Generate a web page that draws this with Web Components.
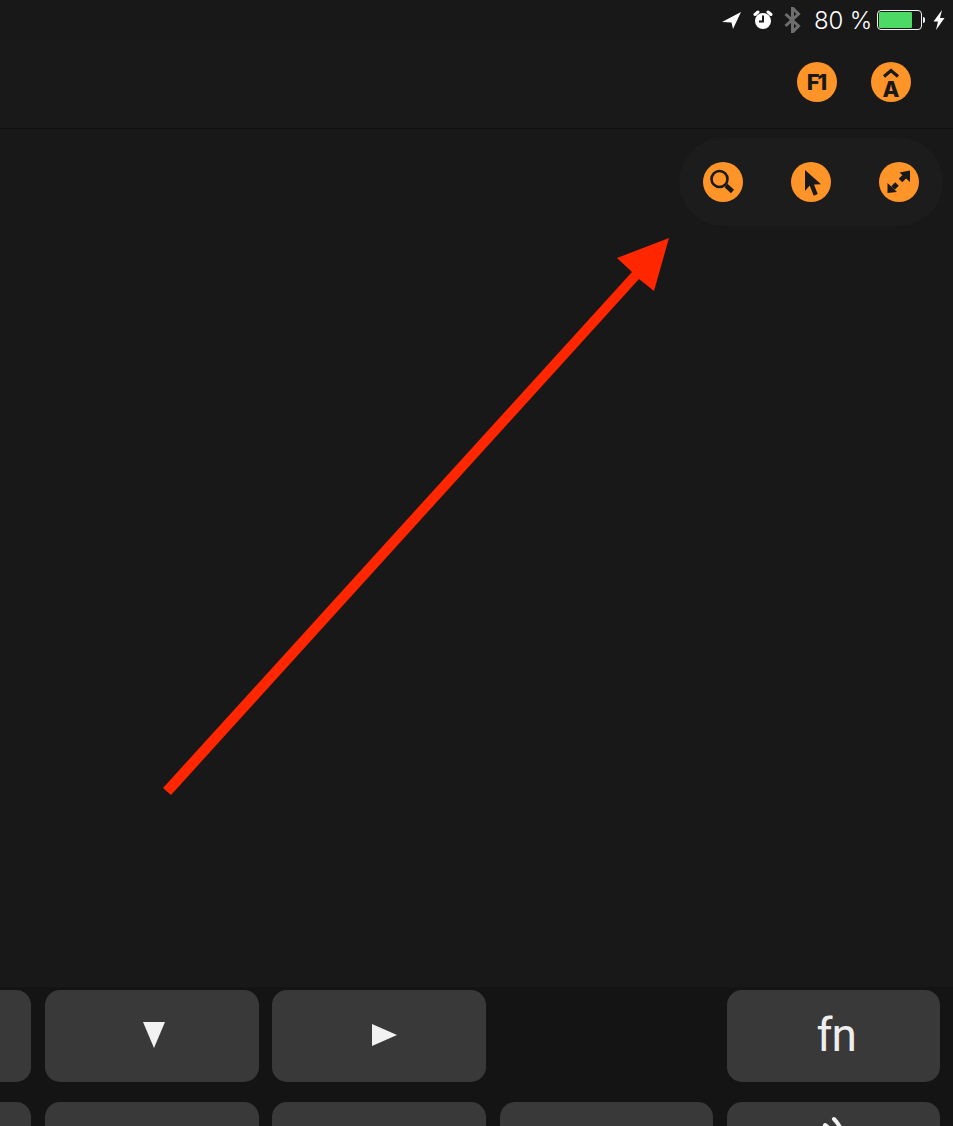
<!DOCTYPE html>
<html>
<head>
<meta charset="utf-8">
<style>
  html, body { margin: 0; height: 100%; background: #181818; overflow: hidden; }
</style>
</head>
<body>
<remote-app></remote-app>

<script>
class StatusBar extends HTMLElement {
  constructor() {
    super();
    this.attachShadow({ mode: "open" });
    this.shadowRoot.innerHTML = `
    <style>
      :host {
        display: flex;
        align-items: center;
        justify-content: flex-end;
        height: 40px;
        padding-right: 8px;
        color: #fff;
        font-family: "Inter", sans-serif;
        font-weight: 300;
        font-size: 24px;
      }
      svg { display: block; flex: none; }
      .pct { margin: 0 5px 0 13px; white-space: nowrap; letter-spacing: -0.2px; }
      .battery {
        box-sizing: border-box;
        width: 45px;
        height: 20px;
        border: 1px solid #f2f2f2;
        border-radius: 4px;
        padding: 1px;
      }
      .battery div { width: 80%; height: 100%; background: #4cd964; border-radius: 1px; }
      .nub { width: 2px; height: 6px; background: #f2f2f2; margin: 0 8px 0 1px; border-radius: 0 2px 2px 0; }
    </style>
    <svg width="20" height="20" viewBox="0 0 20 20" style="margin-right:11px"><path fill="#fff" d="M20 2 1 12l9.500.5L12 19z"/></svg>
    <svg width="22" height="22" viewBox="0 0 22 22" style="margin-right:10px">
      <circle cx="11" cy="12" r="8" fill="#fff"/>
      <path d="M11 6.500V12.500H7" fill="none" stroke="#181818" stroke-width="2"/>
      <path d="M3 5.500 6 3M19 5.500 16 3" stroke="#fff" stroke-width="3" stroke-linecap="round"/>
    </svg>
    <svg width="17" height="26" viewBox="0 0 17 26"><path d="M1.500 7 14.500 19 8.500 25V1l6 6L1.500 19" fill="none" stroke="#6e6e6e" stroke-width="3"/></svg>
    <span class="pct">80 %</span>
    <div class="battery"><div></div></div>
    <div class="nub"></div>
    <svg width="12" height="22" viewBox="0 0 12 22"><path fill="#fff" d="M9 1 0.500 12.500h4.500L3 21 11.500 9H7z"/></svg>`;
  }
}

class RoundButton extends HTMLElement {
  constructor() {
    super();
    this.attachShadow({ mode: "open" });
    this.shadowRoot.innerHTML = `
    <style>
      :host {
        display: flex;
        align-items: center;
        justify-content: center;
        flex-direction: column;
        width: 40px;
        height: 40px;
        border-radius: 50%;
        background: #ff9429;
        color: #191919;
        font-family: "Inter", sans-serif;
        font-weight: 800;
        line-height: 1;
      }
    </style>
    <slot></slot>`;
  }
}

class TopBar extends HTMLElement {
  constructor() {
    super();
    this.attachShadow({ mode: "open" });
    this.shadowRoot.innerHTML = `
    <style>
      :host {
        display: flex;
        justify-content: flex-end;
        gap: 34px;
        box-sizing: border-box;
        height: 89px;
        padding: 22px 42px 0 0;
        background: #191919;
        border-bottom: 1px solid #101010;
      }
    </style>
    <slot></slot>`;
  }
}

class ToolPill extends HTMLElement {
  constructor() {
    super();
    this.attachShadow({ mode: "open" });
    this.shadowRoot.innerHTML = `
    <style>
      :host {
        display: flex;
        align-items: center;
        justify-content: space-between;
        box-sizing: border-box;
        width: 264px;
        height: 88px;
        padding: 0 24px;
        border-radius: 44px;
        background: #1c1c1c;
      }
    </style>
    <slot></slot>`;
  }
}

class KeyCap extends HTMLElement {
  constructor() {
    super();
    this.attachShadow({ mode: "open" });
    this.shadowRoot.innerHTML = `
    <style>
      :host {
        display: flex;
        align-items: center;
        justify-content: center;
        flex: none;
        box-sizing: border-box;
        width: 213.5px;
        height: 92px;
        border-radius: 15px;
        background: #393939;
        color: #eeeeee;
        font-family: "Roboto", sans-serif;
        font-weight: 400;
      }
      :host([blank]) { background: transparent; }
    </style>
    <slot></slot>`;
  }
}

class KeyBoard extends HTMLElement {
  constructor() {
    super();
    this.attachShadow({ mode: "open" });
    this.shadowRoot.innerHTML = `
    <style>
      :host {
        display: flex;
        flex-direction: column;
        gap: 20px;
        box-sizing: border-box;
        height: 139px;
        padding-top: 3px;
        background: #141414;
        overflow: hidden;
      }
      ::slotted(div) { display: flex; gap: 13.8px; margin-left: -182.3px; }
    </style>
    <slot></slot>`;
  }
}

class RemoteApp extends HTMLElement {
  constructor() {
    super();
    this.attachShadow({ mode: "open" });
    this.shadowRoot.innerHTML = `
    <style>
      :host {
        display: flex;
        flex-direction: column;
        position: relative;
        height: 1126px;
        overflow: hidden;
      }
      .canvas { flex: 1; display: flex; justify-content: flex-end; align-items: flex-start; padding: 9px 10px 0 0; }
      .arrow { position: absolute; left: 0; top: 0; pointer-events: none; }
      .f1 { font-size: 22px; letter-spacing: -2px; margin-right: 2px; }
      .a { font-size: 22px; line-height: 16px; }
      .chev { display: block; margin-bottom: 3px; }
      .fn { font-size: 46px; line-height: 1; margin: -2px 0 0 5px; letter-spacing: -1px; }
      .waves { align-self: flex-start; margin-top: 14px; }
    </style>
    <status-bar></status-bar>
    <top-bar>
      <round-button><span class="f1">F1</span></round-button>
      <round-button>
        <svg class="chev" width="18" height="10" viewBox="0 0 18 10"><path d="M2 8.500 9 2.500 16 8.500" fill="none" stroke="#191919" stroke-width="3.200"/></svg>
        <span class="a">A</span>
      </round-button>
    </top-bar>
    <div class="canvas">
      <tool-pill>
        <round-button>
          <svg width="40" height="40" viewBox="0 0 40 40">
            <circle cx="16.500" cy="17" r="8" fill="none" stroke="#191919" stroke-width="2.600"/>
            <path d="M23 23.500 29.500 29.500" stroke="#191919" stroke-width="4.500"/>
          </svg>
        </round-button>
        <round-button>
          <svg width="40" height="40" viewBox="0 0 40 40"><path fill="#191919" d="M14 8 30 22.300 23 22.600 26.700 32 22.700 33.700 18.700 23.500 14 29z"/></svg>
        </round-button>
        <round-button>
          <svg width="40" height="40" viewBox="0 0 40 40">
            <path fill="#191919" d="M31 8.500V20L20.500 10.500zM8.500 21 18 30 8.500 31z"/>
            <path d="M25.500 14.500 21.500 18.500M14 26 18 22" stroke="#191919" stroke-width="5"/>
          </svg>
        </round-button>
      </tool-pill>
    </div>
    <key-board>
      <div>
        <key-cap></key-cap>
        <key-cap><svg width="22" height="26" viewBox="0 0 22 26" style="margin:-3px 0 0 4px"><path fill="#f2f2f2" d="M0 0h22L11 26z"/></svg></key-cap>
        <key-cap><svg width="25" height="22" viewBox="0 0 25 22" style="margin:-2px 0 0 10px"><path fill="#f2f2f2" d="M0 0 25 11 0 22z"/></svg></key-cap>
        <key-cap blank></key-cap>
        <key-cap><span class="fn">fn</span></key-cap>
      </div>
      <div>
        <key-cap></key-cap><key-cap></key-cap><key-cap></key-cap><key-cap></key-cap>
        <key-cap>
          <svg class="waves" width="40" height="30" viewBox="0 0 40 30">
            <path d="M20 3Q24 7 27 13M11 9Q14 11 16 14" fill="none" stroke="#f2f2f2" stroke-width="4" stroke-linecap="round"/>
          </svg>
        </key-cap>
      </div>
    </key-board>
    <svg class="arrow" width="953" height="1126" viewBox="0 0 953 1126">
      <path fill="#ff2600" d="M669 238 617 258 632 272 163 788 171 795 639 279 654 291z"/>
    </svg>`;
  }
}

customElements.define("status-bar", StatusBar);
customElements.define("round-button", RoundButton);
customElements.define("top-bar", TopBar);
customElements.define("tool-pill", ToolPill);
customElements.define("key-cap", KeyCap);
customElements.define("key-board", KeyBoard);
customElements.define("remote-app", RemoteApp);
</script>
</body>
</html>
